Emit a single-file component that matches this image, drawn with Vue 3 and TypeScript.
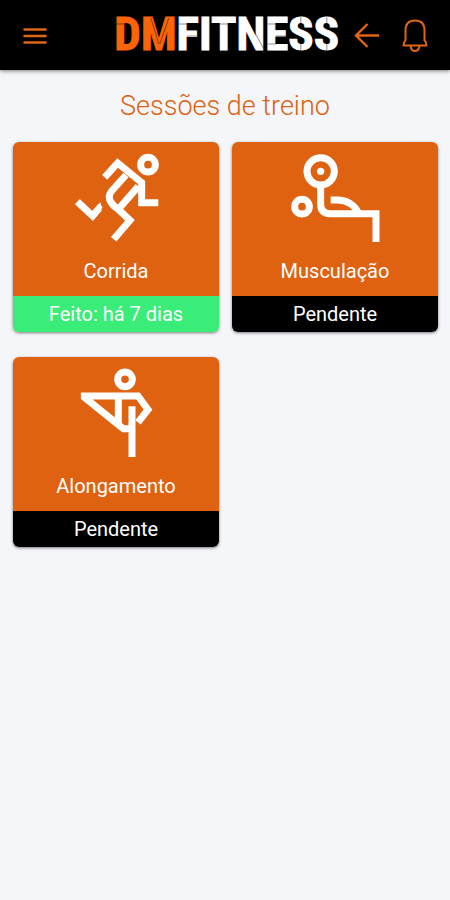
<script setup lang="ts">
type IconName = 'run' | 'lift' | 'stretch'

interface Session {
  name: string
  icon: IconName
  status: string
  done: boolean
}

const sessions: Session[] = [
  { name: 'Corrida', icon: 'run', status: 'Feito: há 7 dias', done: true },
  { name: 'Musculação', icon: 'lift', status: 'Pendente', done: false },
  { name: 'Alongamento', icon: 'stretch', status: 'Pendente', done: false },
]
</script>

<template>
  <div class="screen">
    <header class="bar">
      <button class="icon-btn" type="button" aria-label="Menu">
        <svg width="24" height="24" viewBox="0 0 24 24" aria-hidden="true">
          <path d="M0.5 6.5H23.5M0.5 13H23.5M0.5 19.5H23.5" stroke-width="2.6" />
        </svg>
      </button>
      <div class="logo">
        <span class="logo-dm">DM</span><span class="logo-fit">FITNESS</span>
        <svg class="seams" viewBox="0 0 223 36" aria-hidden="true">
          <path d="M1 8H9M10 8V28M36 2L44 28M54 2L45 28M64 8H72M72 20H82M97 8H121M132 2L149 33M153 8H161M153 28H161M161 20H171M186 1V8M186 28V35M212 1V8M212 28V35" />
        </svg>
      </div>
      <button class="icon-btn" type="button" aria-label="Voltar">
        <svg width="26" height="26" viewBox="0 0 26 26" aria-hidden="true">
          <path d="M25 13.5H2M13.5 2L2 13.5L13.5 25" stroke-width="2.4" />
        </svg>
      </button>
      <button class="icon-btn bell" type="button" aria-label="Notificações">
        <svg width="26" height="34" viewBox="0 0 26 34" aria-hidden="true">
          <path d="M3.5 22.500V12.500C3.500 6 7 2.500 13 2.500S22.500 6 22.500 12.500V22.500Q24.500 24 24.500 27.500H1.500Q1.500 24 3.500 22.500Z" stroke-width="2" stroke-linejoin="round" />
          <path d="M8.500 28C9 31 11 33 13 33S17 31 17.500 28" stroke-width="2" />
        </svg>
      </button>
    </header>

    <main>
      <h1>Sessões de treino</h1>
      <div class="grid">
        <a v-for="s in sessions" :key="s.name" class="card" href="#">
          <div class="card-top">
            <svg v-if="s.icon === 'run'" class="figure" viewBox="-12 0 330 315" aria-hidden="true">
              <circle cx="249" cy="59" r="22" />
              <path d="M119 97L158 54L230 113V173H280" />
              <path d="M183 90L140 138Q127 153 137 170Q143 182 160 193L195 226L146 283" />
              <path d="M220 124L165 187" />
              <path d="M37 170L83 213L103 189" />
              <path class="solid" d="M94 183L106 172Q107 181 113 188L103 199Z" />
            </svg>
            <svg v-else-if="s.icon === 'lift'" class="figure" viewBox="0 0 330 315" aria-hidden="true">
              <circle cx="122" cy="79" r="41" />
              <circle class="solid" cx="122" cy="79" r="11" />
              <circle cx="66" cy="185" r="22" />
              <path d="M122 122V178Q122 206 150 206H288V291" />
              <path d="M152 165H176Q216 168 235 203" />
            </svg>
            <svg v-else class="figure" viewBox="-27 0 330 315" aria-hidden="true">
              <circle cx="165" cy="58" r="22" />
              <path d="M178 206H160L43 112V108H204L234 149L204 187" />
              <path d="M145 108V192" />
              <path d="M186 139V291" />
            </svg>
            <span class="name">{{ s.name }}</span>
          </div>
          <div class="status" :class="{ done: s.done }">{{ s.status }}</div>
        </a>
      </div>
    </main>
  </div>
</template>

<style>
body {
  background: #f5f6fa;
}
</style>

<style scoped>
.screen {
  min-height: 100vh;
  background: #f5f6fa;
  font-family: Roboto, "Liberation Sans", sans-serif;
}

.bar {
  display: flex;
  align-items: center;
  height: 70px;
  padding: 0 22px 0 23px;
  box-sizing: border-box;
  background: #000;
  box-shadow: 0 1px 4px rgba(0, 0, 0, 0.5);
}

.icon-btn {
  display: flex;
  padding: 0;
  border: 0;
  background: none;
}

.icon-btn svg {
  fill: none;
  stroke: #e06612;
}

.bell {
  margin-left: 22px;
}

.logo {
  position: relative;
  display: flex;
  margin: 0 15px 0 auto;
  padding-bottom: 2px;
  font: bold 47px/60px "Liberation Sans Narrow", "Roboto Condensed", Roboto, sans-serif;
  -webkit-text-stroke: 1px currentColor;
}

.logo-dm {
  color: #fb6507;
}

.logo-fit {
  color: #fff;
}

.seams {
  position: absolute;
  top: 12px;
  left: 0;
  width: 100%;
  height: 36px;
  fill: none;
  stroke: rgba(0, 0, 0, 0.45);
  stroke-width: 1;
}

h1 {
  margin: 0;
  padding: 20px 0;
  color: #de6210;
  font-size: 27px;
  font-weight: 300;
  line-height: 32px;
  text-align: center;
}

.grid {
  display: grid;
  grid-template-columns: 1fr 1fr;
  gap: 25px 13px;
  padding: 0 12px 24px 13px;
}

.card {
  overflow: hidden;
  border-radius: 6px;
  box-shadow: 0 1px 3px rgba(0, 0, 0, 0.5);
  color: #fff;
  font-size: 20px;
  text-align: center;
  text-decoration: none;
}

.card-top {
  display: flex;
  flex-direction: column;
  align-items: center;
  padding: 3px 0 12px;
  background: #de6210;
}

.figure {
  width: 110px;
  height: 105px;
  margin-bottom: 8px;
  fill: none;
  stroke: #fff;
  stroke-width: 21;
}

.figure .solid {
  fill: #fff;
  stroke: none;
}

.name {
  line-height: 26px;
}

.status {
  background: #000;
  line-height: 36px;
}

.status.done {
  background: #3aec78;
}
</style>
